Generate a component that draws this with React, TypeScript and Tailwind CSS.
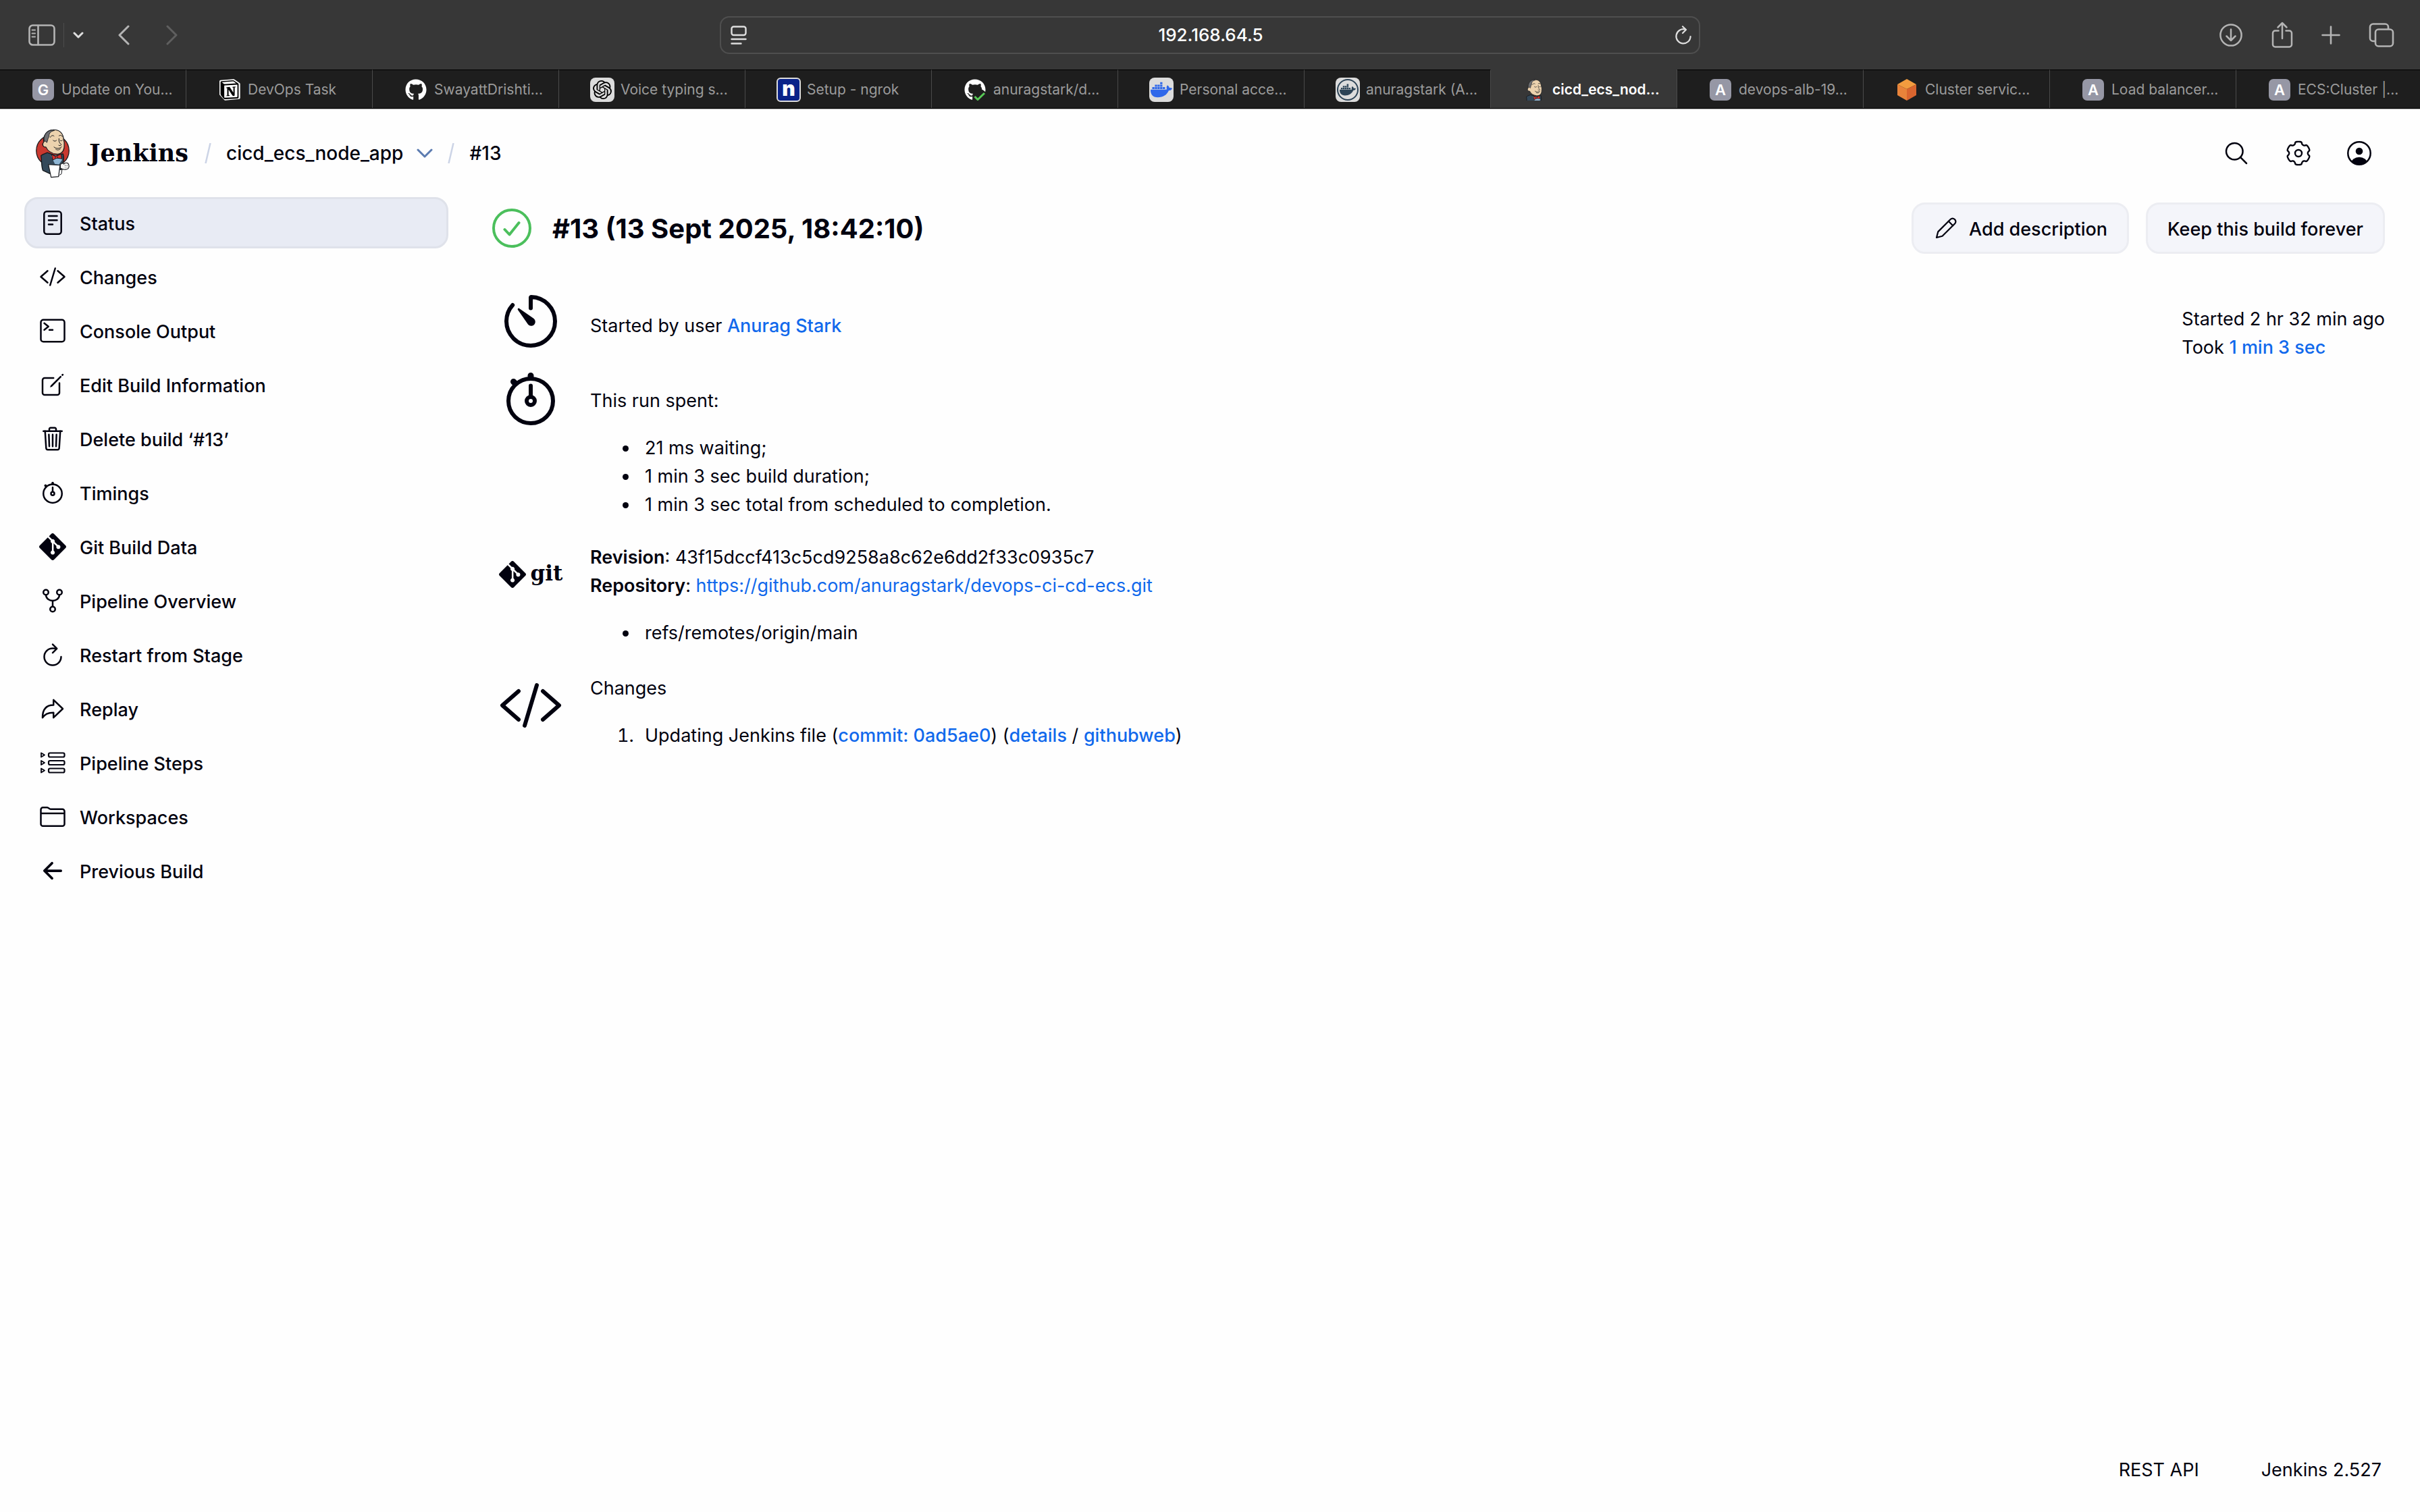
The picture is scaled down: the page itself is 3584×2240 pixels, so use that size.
import React from "react";
import {
  IoArrowBack,
  IoArrowRedoOutline,
  IoCodeSlashOutline,
  IoCreateOutline,
  IoFolderOutline,
  IoGitNetworkOutline,
  IoRefreshOutline,
  IoSearchOutline,
  IoStopwatchOutline,
  IoTerminalOutline,
  IoTimerOutline,
  IoTrashOutline,
} from "react-icons/io5";
import { FaDocker, FaGithub } from "react-icons/fa";
import { SiGit, SiNotion, SiOpenai } from "react-icons/si";

/* ---------- Jenkins mascot ---------- */

function Mascot({ className, head = false }: { className: string; head?: boolean }) {
  return (
    <svg viewBox={head ? "52 26 124 146" : "36 27 156 220"} className={className} aria-hidden="true">
      {!head && <ellipse cx="114" cy="124" rx="73" ry="71" fill="#c9382f" stroke="#1d1d1f" strokeWidth="4" />}
      <path
        d="M70 141 L90 133 L128 146 L160 138 C164 150 164 166 160 178 L152 196 L148 226 L104 228 L70 212 C62 190 66 164 62 146 Z"
        fill="#34495a"
        stroke="#16181c"
        strokeWidth="4"
        strokeLinejoin="round"
      />
      <path d="M106 146 L150 146 L156 166 L142 186 L124 184 Z" fill="#8fb6d4" />
      <path
        d="M84 108 C72 110 64 96 74 86 C70 56 88 32 116 31 C146 29 162 48 163 76 C169 90 165 102 165 112 C162 132 146 141 130 139 C108 136 92 126 84 108 Z"
        fill="#ecd2ae"
        stroke="#16181c"
        strokeWidth="3.6"
        strokeLinejoin="round"
      />
      <path
        d="M77 84 C72 60 82 42 102 34 C112 31 118 32 122 34 C104 38 96 48 98 62 C92 68 92 80 88 88 C85 82 80 80 77 84 Z"
        fill="#6d6e72"
        stroke="#16181c"
        strokeWidth="2.6"
        strokeLinejoin="round"
      />
      <path
        d="M104 64 C107 56 115 54 120 59 M142 58 C147 53 155 55 157 61 M116 78 C120 83 127 83 131 78 M147 78 C150 81 154 81 157 78 M142 70 C140 84 145 92 153 97 C151 102 145 103 141 100 M120 108 C131 117 146 115 154 107 M128 118 C135 123 144 121 149 115"
        fill="none"
        stroke="#16181c"
        strokeWidth="3"
        strokeLinecap="round"
      />
      <path
        d="M109 141 L128 150 L151 139 L155 160 L132 157 L114 166 Z"
        fill="#d8322c"
        stroke="#16181c"
        strokeWidth="3"
        strokeLinejoin="round"
      />
      <circle cx="131" cy="153" r="5" fill="#e8423a" stroke="#16181c" strokeWidth="2.5" />
      {!head && (
        <>
          <path
            d="M148 188 C152 178 162 180 164 184 C168 176 184 176 186 188 C190 200 182 208 172 208 C162 210 154 206 148 202 Z"
            fill="#f4f4f4"
            stroke="#16181c"
            strokeWidth="3.5"
            strokeLinejoin="round"
          />
          <path d="M170 188 V192 M178 189 V193 M170 198 V200 M178 199 V201" stroke="#16181c" strokeWidth="2.2" />
          <path
            d="M95 186 L147 189 L140 240 L107 243 Z"
            fill="#ffffff"
            stroke="#16181c"
            strokeWidth="3.6"
            strokeLinejoin="round"
          />
          <path d="M146 210 L156 208 L153 228 L143 234" fill="#ffffff" stroke="#16181c" strokeWidth="3" />
        </>
      )}
    </svg>
  );
}

/* ---------- browser icons ---------- */

function SidebarIcon() {
  return (
    <svg viewBox="0 0 40 32" className="h-8 w-10" fill="none" stroke="#b4b4b4" strokeWidth="2.6" strokeLinecap="round">
      <rect x="1.5" y="1.5" width="37" height="29" rx="5" />
      <path d="M14.5 2v28" />
      <path d="M5.5 8.5h4.5M5.5 13.5h4.5M5.5 18.5h4.5" strokeWidth="2" />
    </svg>
  );
}

function ReaderIcon() {
  return (
    <svg viewBox="0 0 24 28" className="h-7 w-6" fill="none" stroke="#dedede" strokeWidth="2.4" strokeLinecap="round">
      <rect x="1.5" y="1.5" width="21" height="12.5" rx="3" />
      <path d="M1.5 20h21M1.5 26.5h14" />
    </svg>
  );
}

function ReloadIcon() {
  return (
    <svg
      viewBox="0 0 26 28"
      className="h-7 w-[26px]"
      fill="none"
      stroke="#dedede"
      strokeWidth="2.2"
      strokeLinecap="round"
      strokeLinejoin="round"
    >
      <path d="M16 5.6A10.6 10.6 0 1 0 23.6 16" />
      <path d="M12 1.2 17 6 12 11" />
    </svg>
  );
}

function DownloadIcon() {
  return (
    <svg
      viewBox="0 0 36 36"
      className="size-9"
      fill="none"
      stroke="#b4b4b4"
      strokeWidth="2.5"
      strokeLinecap="round"
      strokeLinejoin="round"
    >
      <circle cx="18" cy="18" r="15.6" />
      <path d="M18 9.5v16M11.5 19.5l6.5 6.5 6.5-6.5" />
    </svg>
  );
}

function ShareIcon() {
  return (
    <svg
      viewBox="0 0 32 40"
      className="h-10 w-8"
      fill="none"
      stroke="#b4b4b4"
      strokeWidth="2.5"
      strokeLinecap="round"
      strokeLinejoin="round"
    >
      <path d="M10.5 13.5H5.5A3.5 3.5 0 0 0 2 17v17a3.5 3.5 0 0 0 3.5 3.5h21A3.5 3.5 0 0 0 30 34V17a3.5 3.5 0 0 0-3.5-3.5h-5" />
      <path d="M16 25V2.5M9.5 8.5 16 2l6.5 6.5" />
    </svg>
  );
}

function PlusIcon() {
  return (
    <svg viewBox="0 0 28 28" className="size-7" fill="none" stroke="#b4b4b4" strokeWidth="2.6" strokeLinecap="round">
      <path d="M14 1.5v25M1.5 14h25" />
    </svg>
  );
}

function WindowsIcon() {
  return (
    <svg viewBox="0 0 38 38" className="size-[38px]" fill="none" stroke="#b4b4b4" strokeWidth="2.6" strokeLinejoin="round">
      <rect x="10" y="10.5" width="26" height="25" rx="4.5" />
      <path d="M10 28H6.5A4.5 4.5 0 0 1 2 23.500V7a4.500 4.500 0 0 1 4.500-4.500h18A4.500 4.500 0 0 1 29 7v3.500" />
    </svg>
  );
}

function Chevron({ d }: { d: string }) {
  return (
    <svg
      viewBox="0 0 18 30"
      className="h-[30px] w-[18px]"
      fill="none"
      stroke="currentColor"
      strokeWidth="3"
      strokeLinecap="round"
      strokeLinejoin="round"
    >
      <path d={d} />
    </svg>
  );
}

/* ---------- favicons ---------- */

function LetterTile({ letter }: { letter: string }) {
  return (
    <span className="flex size-8 items-center justify-center rounded-[7px] bg-[#9697a5] text-[22px] font-semibold leading-none text-white">
      {letter}
    </span>
  );
}

function NotionIcon() {
  return (
    <span className="relative block size-8">
      <svg viewBox="0 0 24 24" className="absolute inset-0 size-8">
        <path
          d="M2 2.500 16.500 1.500 22.500 5.500V21L7 22.500 2 17Z"
          fill="#fff"
          stroke="#fff"
          strokeWidth="2.500"
          strokeLinejoin="round"
        />
      </svg>
      <SiNotion className="absolute inset-[2px] size-7 text-black" />
    </span>
  );
}

function GithubCheckIcon() {
  return (
    <span className="relative block size-8">
      <FaGithub className="size-8 text-white" />
      <svg viewBox="0 0 32 32" className="absolute inset-0 size-8" fill="none">
        <circle cx="23" cy="25" r="10" fill="#1e1e1e" />
        <path d="m15.500 26 4.500 4.500 10-9.500" stroke="#57c956" strokeWidth="3" />
      </svg>
    </span>
  );
}

function CubeIcon() {
  return (
    <svg viewBox="0 0 28 32" className="h-8 w-7">
      <path d="M14 0 28 8 14 15 0 8Z" fill="#f29c3f" />
      <path d="M0 8 14 15V32L0 24Z" fill="#e8833a" />
      <path d="M28 8 14 15V32L28 24Z" fill="#d9652f" />
    </svg>
  );
}

const TABS: { label: string; icon: React.ReactNode; active?: boolean }[] = [
  { label: "Update on You...", icon: <LetterTile letter="G" /> },
  { label: "DevOps Task", icon: <NotionIcon /> },
  { label: "SwayattDrishti...", icon: <FaGithub className="size-8 text-white" /> },
  {
    label: "Voice typing s...",
    icon: (
      <span className="flex size-9 items-center justify-center rounded-lg bg-[#dcdcdc]">
        <SiOpenai className="size-7 text-black" />
      </span>
    ),
  },
  {
    label: "Setup - ngrok",
    icon: (
      <span className="flex size-9 items-center justify-center rounded-md border-2 border-[#dcdcdc] bg-[#0a2289] pb-1 text-[30px] font-black leading-none text-white">
        n
      </span>
    ),
  },
  { label: "anuragstark/d...", icon: <GithubCheckIcon /> },
  {
    label: "Personal acce...",
    icon: (
      <span className="flex size-9 items-center justify-center rounded-lg bg-[#dcdcdc]">
        <FaDocker className="size-8 text-[#2f68ea]" />
      </span>
    ),
  },
  {
    label: "anuragstark (A...",
    icon: (
      <span className="flex size-9 items-center justify-center rounded-lg bg-[#dcdcdc]">
        <span className="flex size-8 items-center justify-center rounded-full border-2 border-[#2c4356]">
          <FaDocker className="size-6 text-[#2c4356]" />
        </span>
      </span>
    ),
  },
  { label: "cicd_ecs_nod...", icon: <Mascot head className="h-8 w-7" />, active: true },
  { label: "devops-alb-19...", icon: <LetterTile letter="A" /> },
  { label: "Cluster servic...", icon: <CubeIcon /> },
  { label: "Load balancer...", icon: <LetterTile letter="A" /> },
  { label: "ECS:Cluster |...", icon: <LetterTile letter="A" /> },
];

function BrowserChrome() {
  return (
    <div className="border-b border-[#b5b5b5] text-[#b4b4b4]">
      <div className="grid h-[103px] grid-cols-[1fr_40.5%_1fr] items-center bg-[#373737]">
        <div className="flex items-center pl-[42px]">
          <button aria-label="Show sidebar">
            <SidebarIcon />
          </button>
          <span className="ml-3 h-9 w-px bg-[#4c4c4c]" />
          <button aria-label="Tab groups" className="ml-[13px] text-[#dedede]">
            <svg
              viewBox="0 0 16 10"
              className="h-[10px] w-4"
              fill="none"
              stroke="currentColor"
              strokeWidth="3"
              strokeLinecap="round"
              strokeLinejoin="round"
            >
              <path d="m2 2 6 6 6-6" />
            </svg>
          </button>
          <button aria-label="Back" className="ml-[50px]">
            <Chevron d="M16 2 3 15l13 13" />
          </button>
          <button aria-label="Forward" className="ml-[54px] text-[#5f5f5f]">
            <Chevron d="m2 2 13 13L2 28" />
          </button>
        </div>
        <div className="flex h-14 items-center rounded-[14px] border-2 border-[#4f4f4f] pl-[14px] pr-[10px]">
          <button aria-label="Reader">
            <ReaderIcon />
          </button>
          <input
            aria-label="Address"
            readOnly
            value="192.168.64.5"
            className="min-w-0 flex-1 bg-transparent text-center text-[26px] font-medium text-white outline-none"
          />
          <button aria-label="Reload">
            <ReloadIcon />
          </button>
        </div>
        <div className="flex items-center justify-end gap-[42px] pr-[38px]">
          <button aria-label="Downloads">
            <DownloadIcon />
          </button>
          <button aria-label="Share">
            <ShareIcon />
          </button>
          <button aria-label="New tab">
            <PlusIcon />
          </button>
          <button aria-label="Tab overview">
            <WindowsIcon />
          </button>
        </div>
      </div>
      <div role="tablist" className="flex overflow-hidden border-b border-black">
        {TABS.map((tab, i) => (
          <button
            key={i}
            role="tab"
            aria-selected={!!tab.active}
            className={
              tab.active
                ? "flex h-[57px] min-w-0 flex-[1_0_276px] items-center gap-[9px] overflow-hidden whitespace-nowrap border-r border-[#4a4a4a] bg-[#373737] pl-[46px] pt-0.5 text-[21px] font-semibold text-white"
                : "flex h-[57px] min-w-0 flex-[1_0_276px] items-center gap-[9px] overflow-hidden whitespace-nowrap border-r border-t border-r-[#4a4a4a] border-t-black bg-[#1e1e1e] pl-[46px] pt-0.5 text-[21px] text-[#9b9b9b]"
            }
          >
            <span className="flex w-9 shrink-0 justify-center">{tab.icon}</span>
            {tab.label}
          </button>
        ))}
      </div>
    </div>
  );
}

/* ---------- Jenkins icons ---------- */

/* Six-toothed cog, rounded by running quadratic curves through segment midpoints. */
const GEAR_PATH = (() => {
  const points: [number, number][] = [];
  for (let tooth = 0; tooth < 6; tooth++) {
    for (const [angle, radius] of [[-16, 17.3], [0, 17.3], [16, 17.3], [20, 14.6], [30, 13.6], [40, 14.6]]) {
      const a = ((tooth * 60 + angle - 90) * Math.PI) / 180;
      points.push([18 + radius * Math.cos(a), 18 + radius * Math.sin(a)]);
    }
  }
  const mid = (a: [number, number], b: [number, number]) =>
    `${((a[0] + b[0]) / 2).toFixed(2)} ${((a[1] + b[1]) / 2).toFixed(2)}`;
  const n = points.length;
  let d = `M${mid(points[n - 1], points[0])}`;
  points.forEach((p, i) => {
    d += `Q${p[0].toFixed(2)} ${p[1].toFixed(2)} ${mid(p, points[(i + 1) % n])}`;
  });
  return d + "Z";
})();

function GearIcon() {
  return (
    <svg viewBox="0 0 36 36" className="size-9 overflow-visible" fill="none" stroke="currentColor" strokeWidth="2.4">
      <path d={GEAR_PATH} />
      <circle cx="18" cy="18" r="5" />
    </svg>
  );
}

function PersonIcon() {
  return (
    <svg viewBox="0 0 36 36" className="size-9">
      <clipPath id="avatar">
        <circle cx="18" cy="18" r="17" />
      </clipPath>
      <circle cx="18" cy="18" r="16.7" fill="none" stroke="currentColor" strokeWidth="2.5" />
      <circle cx="18" cy="15" r="5.3" fill="currentColor" />
      <ellipse cx="18" cy="33" rx="12" ry="9.2" fill="currentColor" clipPath="url(#avatar)" />
    </svg>
  );
}

function StatusIcon() {
  return (
    <svg viewBox="0 0 40 40" className="size-10" fill="none" stroke="currentColor" strokeWidth="2.5" strokeLinecap="round">
      <rect x="7.3" y="3.3" width="25.4" height="33.4" rx="4" />
      <path d="M14 10h12.5M14 16.3h12.500M14 22.500h6" />
    </svg>
  );
}

function StepsIcon() {
  return (
    <svg viewBox="0 0 40 40" className="size-10" fill="none" stroke="currentColor" strokeWidth="2.2" strokeLinejoin="round">
      {[8.5, 20, 31.5].map((y) => (
        <g key={y}>
          <path d={`M3 ${y - 3}v6l5-3z`} strokeWidth="1.8" />
          <rect x="14" y={y - 3} width="23.5" height="6" rx="2" />
        </g>
      ))}
    </svg>
  );
}

function PencilIcon() {
  return (
    <svg
      viewBox="0 0 32 32"
      className="size-8"
      fill="none"
      stroke="currentColor"
      strokeWidth="2.2"
      strokeLinejoin="round"
      strokeLinecap="round"
    >
      <path d="M2 30l2.200-8.600L22.800 2.800c1.600-1.600 4.200-1.600 5.800 0l.6.6c1.600 1.600 1.600 4.200 0 5.800L10.600 27.800z" />
      <path d="M19.800 5.800l6.400 6.400" />
    </svg>
  );
}

function SuccessIcon() {
  return (
    <svg
      viewBox="0 0 58 58"
      className="size-[58px]"
      fill="none"
      stroke="#4bbf5c"
      strokeWidth="4"
      strokeLinecap="round"
      strokeLinejoin="round"
    >
      <circle cx="29" cy="29" r="27" />
      <path d="M18.500 31l7 7.500L39.500 21" />
    </svg>
  );
}

function Slash() {
  return (
    <svg viewBox="0 0 10 30" className="h-[30px] w-[10px]" stroke="#ccd4e6" strokeWidth="2.5">
      <path d="M8.500 0 1.500 30" />
    </svg>
  );
}

const NAV: { label: string; icon: React.ReactNode; active?: boolean }[] = [
  { label: "Status", icon: <StatusIcon />, active: true },
  { label: "Changes", icon: <IoCodeSlashOutline className="size-10" /> },
  { label: "Console Output", icon: <IoTerminalOutline className="size-10" /> },
  { label: "Edit Build Information", icon: <IoCreateOutline className="size-10" /> },
  { label: "Delete build ‘#13’", icon: <IoTrashOutline className="size-10" /> },
  { label: "Timings", icon: <IoStopwatchOutline className="size-10" /> },
  { label: "Git Build Data", icon: <SiGit className="size-10" /> },
  { label: "Pipeline Overview", icon: <IoGitNetworkOutline className="size-10" /> },
  { label: "Restart from Stage", icon: <IoRefreshOutline className="size-10" /> },
  { label: "Replay", icon: <IoArrowRedoOutline className="size-10" /> },
  { label: "Pipeline Steps", icon: <StepsIcon /> },
  { label: "Workspaces", icon: <IoFolderOutline className="size-10" /> },
  { label: "Previous Build", icon: <IoArrowBack className="size-10" /> },
];

function SideNav() {
  return (
    <nav className="flex w-[628px] shrink-0 flex-col gap-1">
      {NAV.map((item) => (
        <a
          key={item.label}
          href="#"
          className={
            item.active
              ? "flex h-[76px] items-center gap-5 rounded-[20px] border-[3px] border-[#dfe2ea] bg-[#e8ebf4] px-[19px] font-medium"
              : "flex h-[76px] items-center gap-5 rounded-[20px] px-[22px] font-medium"
          }
        >
          {item.icon}
          <span className="pt-[3px]">{item.label}</span>
        </a>
      ))}
    </nav>
  );
}

function Link({ children, medium = true }: { children: React.ReactNode; medium?: boolean }) {
  return (
    <a href="#" className={medium ? "font-medium text-[#1169ec]" : "text-[#1169ec]"}>
      {children}
    </a>
  );
}

function Row({ icon, children, className }: { icon: React.ReactNode; children: React.ReactNode; className: string }) {
  return (
    <section className="flex gap-10">
      <div className="flex size-24 shrink-0 items-center justify-center">{icon}</div>
      <div className={className}>{children}</div>
    </section>
  );
}

export default function App() {
  return (
    <div className="flex min-h-screen flex-col bg-[#fefefe] font-['Inter',sans-serif] text-[27px] leading-[42px] text-[#02020f]">
      <BrowserChrome />

      <header className="flex h-[130px] items-center pl-[52px] pr-[72px]">
        <a href="#" className="flex items-center">
          <Mascot className="h-[73px] w-[52px]" />
          <span className="ml-7 font-['DejaVu_Serif',serif] text-[35px] font-bold">Jenkins</span>
        </a>
        <nav aria-label="Breadcrumb" className="ml-6 flex items-center text-[28px] font-medium">
          <Slash />
          <a href="#" className="ml-[22px]">
            cicd_ecs_node_app
          </a>
          <button aria-label="Open menu" className="ml-5 text-[#5b7bb0]">
            <svg
              viewBox="0 0 24 14"
              className="h-[14px] w-6"
              fill="none"
              stroke="currentColor"
              strokeWidth="3"
              strokeLinecap="round"
              strokeLinejoin="round"
            >
              <path d="m2 2 10 10L22 2" />
            </svg>
          </button>
          <span className="ml-[22px] flex">
            <Slash />
          </span>
          <span className="ml-[22px]">#13</span>
        </nav>
        <div className="ml-auto flex items-center gap-[54px]">
          <button aria-label="Search">
            <IoSearchOutline className="size-10" />
          </button>
          <button aria-label="Manage Jenkins">
            <GearIcon />
          </button>
          <button aria-label="Account">
            <PersonIcon />
          </button>
        </div>
      </header>

      <div className="flex flex-1 pl-9 pr-[52px]">
        <SideNav />
        <main className="ml-[65px] min-w-0 flex-1 pt-2">
          <div className="flex h-[76px] items-center">
            <SuccessIcon />
            <h1 className="ml-[31px] pt-0.5 text-[40px] font-bold">#13 (13 Sept 2025, 18:42:10)</h1>
            <div className="ml-auto flex gap-[25px] font-medium">
              <button className="flex h-[76px] items-center gap-[18px] rounded-[20px] border-[3px] border-[#ecedf2] bg-[#f4f5fa] pl-8 pr-[29px]">
                <PencilIcon />
                <span className="pt-[3px]">Add description</span>
              </button>
              <button className="h-[76px] rounded-[20px] border-[3px] border-[#ecedf2] bg-[#f4f5fa] px-[29px] pt-[3px]">
                Keep this build forever
              </button>
            </div>
          </div>

          <div className="mt-[52px] flex justify-between">
            <div className="pl-[9px]">
              <Row icon={<IoTimerOutline className="size-24" />} className="pb-[39px] pt-[34px]">
                Started by user <Link>Anurag Stark</Link>
              </Row>
              <Row icon={<IoStopwatchOutline className="size-24" />} className="pb-[34px] pt-[30px]">
                <p>This run spent:</p>
                <ul className="mt-7 list-disc pl-[72px]">
                  <li className="pl-[9px]">21 ms waiting;</li>
                  <li className="pl-[9px]">1 min 3 sec build duration;</li>
                  <li className="pl-[9px]">1 min 3 sec total from scheduled to completion.</li>
                </ul>
              </Row>
              <Row
                icon={
                  <span className="flex items-center gap-[7px]">
                    <SiGit className="size-10" />
                    <span className="pb-1 font-['DejaVu_Serif',serif] text-[31px] font-bold leading-none">git</span>
                  </span>
                }
                className="pb-[38px] pt-0.5"
              >
                <p>
                  <b className="font-semibold">Revision</b>: 43f15dccf413c5cd9258a8c62e6dd2f33c0935c7
                </p>
                <p>
                  <b className="font-semibold">Repository</b>:{" "}
                  <Link medium={false}>https://github.com/anuragstark/devops-ci-cd-ecs.git</Link>
                </p>
                <ul className="mt-7 list-disc pl-[72px]">
                  <li className="pl-[9px]">refs/remotes/origin/main</li>
                </ul>
              </Row>
              <Row icon={<IoCodeSlashOutline className="size-24" />} className="pt-0.5">
                <p>Changes</p>
                <ol className="mt-7 list-decimal pl-[72px]">
                  <li className="pl-[9px]">
                    Updating Jenkins file (<Link>commit: 0ad5ae0</Link>) (<Link>details</Link> / <Link>githubweb</Link>)
                  </li>
                </ol>
              </Row>
            </div>
            <aside className="pt-6">
              <p>Started 2 hr 32 min ago</p>
              <p>
                Took <Link>1 min 3 sec</Link>
              </p>
            </aside>
          </div>
        </main>
      </div>

      <footer className="flex justify-end gap-[92px] pb-[41px] pr-[57px]">
        <a href="#">REST API</a>
        <a href="#">Jenkins 2.527</a>
      </footer>
    </div>
  );
}
